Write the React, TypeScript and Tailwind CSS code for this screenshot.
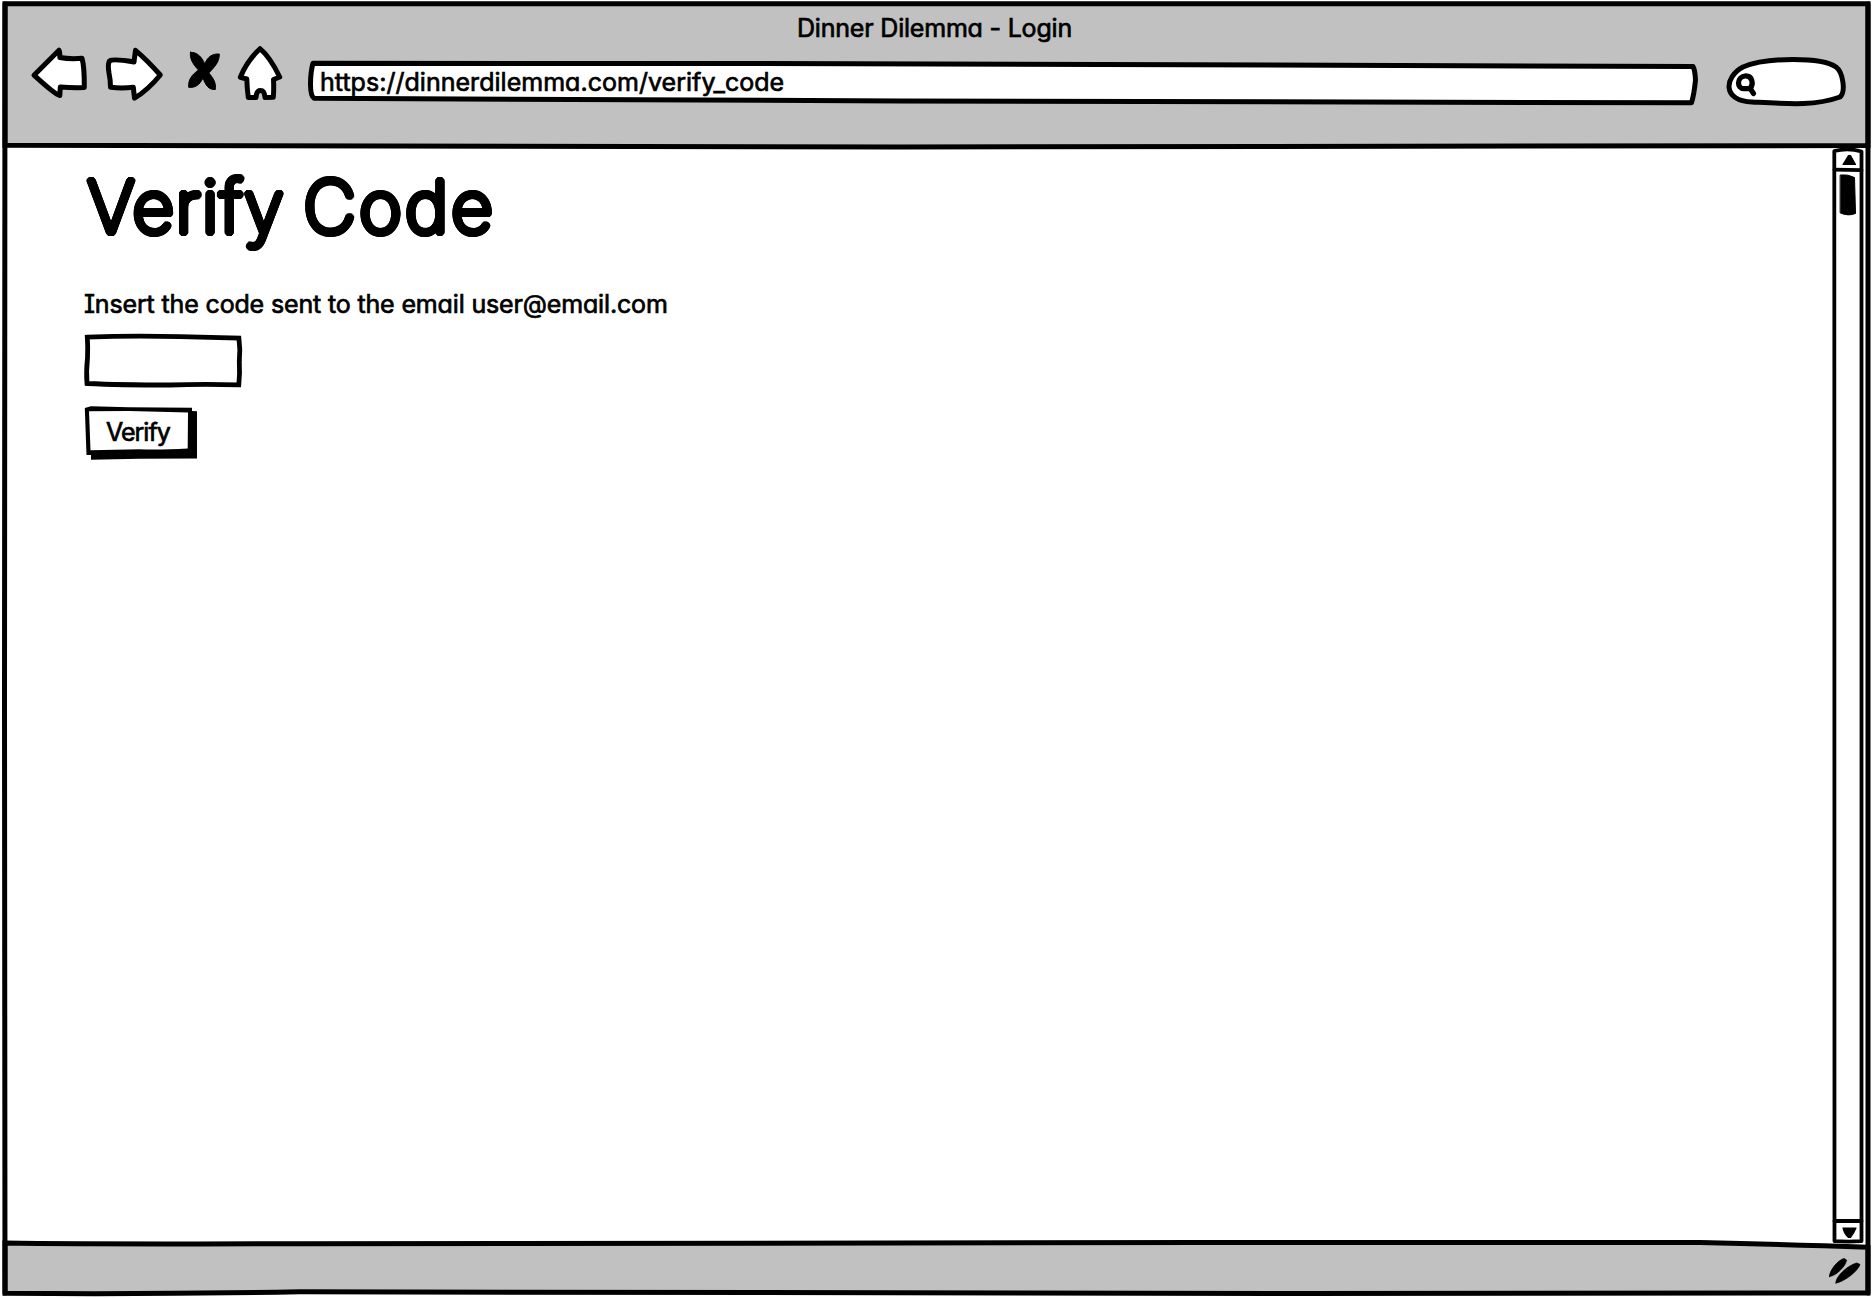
import type { ReactNode } from "react";

type SketchProps = { viewBox: string; className?: string; children: ReactNode };

/* Hand-drawn artwork; rounded ink strokes. */
function Sketch({ viewBox, className = "", children }: SketchProps) {
  return (
    <svg
      viewBox={viewBox}
      preserveAspectRatio="none"
      className={"overflow-visible " + className}
      fill="none"
      stroke="#000"
      strokeWidth="5"
      strokeLinecap="round"
      strokeLinejoin="round"
      aria-hidden="true"
    >
      {children}
    </svg>
  );
}

const BACKDROP = "pointer-events-none absolute inset-0 size-full";
const LABEL =
  "whitespace-nowrap text-[25px] leading-[30px] font-normal [-webkit-text-stroke:0.7px_#000]";
/* Thin glyphs thickened evenly all round, which gives them round pen ends. */
const MARKER =
  "font-extralight [text-shadow:3px_0_#000,2.8px_1.1px_#000,2.1px_2.1px_#000,1.1px_2.8px_#000,0_3px_#000,-1.1px_2.8px_#000,-2.1px_2.1px_#000,-2.8px_1.1px_#000,-3px_0_#000,-2.8px_-1.1px_#000,-2.1px_-2.1px_#000,-1.1px_-2.8px_#000,0_-3px_#000,1.1px_-2.8px_#000,2.1px_-2.1px_#000,2.8px_-1.1px_#000]";

function Toolbar() {
  return (
    <header className="relative flex h-[145px] shrink-0 flex-col">
      <Sketch viewBox="0 0 1872 145" className={BACKDROP}>
        <path
          d="M5 3.8H1868V145.5Q1200 145 900 147Q400 147 5 145.3Z"
          fill="#c1c1c1"
          strokeLinejoin="miter"
        />
      </Sketch>
      <div className="relative flex h-[47px] justify-center pt-[13px] pr-[3px]">
        <h2 className={LABEL + " tracking-[-0.2px]"}>Dinner Dilemma - Login</h2>
      </div>
      <nav className="relative flex h-[60px] items-start pl-[30px]">
        <button type="button" aria-label="Back" className="h-[55px] w-[58px]">
          <Sketch viewBox="30 47 58 55" className="size-full">
            <path
              d="M34 75.2L59 50.2Q60 51 59.8 57.5Q70 59.3 82 58.3Q84.5 67 84.3 87.6Q72 88 60.3 87L59.8 95.5Q55 94.5 34 75.2Z"
              fill="#fff"
            />
          </Sketch>
        </button>
        <button type="button" aria-label="Forward" className="ml-[17px] h-[55px] w-[59px]">
          <Sketch viewBox="105 47 59 55" className="size-full">
            <path
              d="M109.5 61Q113 58.5 134 62L135.5 50.3Q147 60 160.3 75Q148 90 134.5 98.2L133.3 87.2Q122 88.5 110.5 87.3Q110.5 80 109 73Q107.5 64 109.5 61Z"
              fill="#fff"
            />
          </Sketch>
        </button>
        <button type="button" aria-label="Stop" className="ml-[23px] h-[55px] w-[34px]">
          <Sketch viewBox="187 47 34 55" className="size-full">
            <path
              d="M190.500 52.300C197 52 202 57 204.700 64C207.500 57 212 53.500 219.300 54C219.500 62 214.500 67 208.800 73C213.500 78 216.500 84 215.300 89.500C208.500 90 205.500 85 203 78C199.500 85 195.500 88 188.700 87.300C188 79 192.500 74.500 198.500 70C192.500 64 189.500 58 190.500 52.300Z"
              fill="#000"
              strokeWidth="1"
            />
          </Sketch>
        </button>
        <button type="button" aria-label="Home" className="ml-[15px] h-[55px] w-[47px]">
          <Sketch viewBox="236 47 47 55" className="size-full">
            <path
              d="M260 48.700Q270 57 279.700 77L273.500 79.500Q274 88 273.300 97.300L265 97.500Q264.500 90.500 260.500 90.500Q256.500 90.500 256 97.500L248.300 97.600Q247 88 246.800 79L240.300 77.300Q247 61 260 48.700Z"
              fill="#fff"
            />
          </Sketch>
        </button>
        <div className="relative ml-[24px] mt-[12px] flex h-[46px] w-[1391px] items-center pl-[13px]">
          <Sketch viewBox="307 59 1391 46" className={BACKDROP}>
            <path
              d="M313 63.200Q600 62.500 850 63.700Q1300 66.500 1693 66.500Q1695 70 1695.500 80Q1694 95 1691.500 102.800Q1300 102.800 900 101Q500 98 314 98.200Q310.500 96 310.500 84Q310.500 72 313 63.200Z"
              fill="#fff"
            />
          </Sketch>
          <span className={LABEL + " relative tracking-[0.03px]"}>https://dinnerdilemma.com/verify_code</span>
        </div>
        <div className="relative ml-[28px] mt-[10px] h-[50px] w-[122px]">
          <Sketch viewBox="1726 57 122 50" className={BACKDROP}>
            <path
              d="M1752 102C1722 101 1724 77 1743 67C1767 57 1822 57 1836 67C1843 72 1846 92 1840 97C1815 106 1790 104 1752 102Z"
              fill="#fff"
            />
            <path
              d="M1745 76C1736.500 77 1736.500 88.700 1744 88.700H1750C1754 84 1752.500 75.500 1745 76ZM1750.500 89L1753.500 93.500"
              strokeWidth="5.2"
            />
          </Sketch>
        </div>
      </nav>
    </header>
  );
}

function Scrollbar() {
  return (
    <aside className="relative flex h-full w-[28px] shrink-0 flex-col justify-between">
      <Sketch viewBox="1834 145 28 1098" className={BACKDROP}>
        <path
          strokeWidth="3.8"
          d="M1834.300 151Q1848 147.500 1861.500 151.500V1241.200Q1848 1242 1834.500 1241.200Z"
          fill="#fff"
        />
      </Sketch>
      <button type="button" aria-label="Scroll up" className="relative h-[72px] w-[28px]">
        <Sketch viewBox="1834 145 28 72" className="size-full">
          <path d="M1834.500 169.700L1861.500 170.200" strokeWidth="3.800" />
          <path d="M1843 164.500L1848.500 155.500H1850.500L1855.500 164.500Z" fill="#000" strokeWidth="1.200" />
          <path
            d="M1840.500 175Q1848 174 1854.500 177.500L1855.500 213.500Q1848 216.500 1840.500 213Z"
            fill="#000"
            strokeWidth="1"
          />
        </Sketch>
      </button>
      <button type="button" aria-label="Scroll down" className="relative h-[25px] w-[28px]">
        <Sketch viewBox="1834 1218 28 25" className="size-full">
          <path d="M1834.500 1221H1861.500" strokeWidth="3.800" />
          <path d="M1843 1228H1856Q1854.500 1232 1850.500 1237.500H1848.500Q1844.500 1234 1843 1228Z" fill="#000" strokeWidth="1.200" />
        </Sketch>
      </button>
    </aside>
  );
}

function VerifyForm() {
  return (
    <form className="relative flex flex-1 flex-col items-start pl-[84px]">
      <h1
        className={
          "mt-[18px] ml-[3px] whitespace-nowrap text-[73px] leading-[88px] tracking-[1.1px] [word-spacing:-3.5px] " +
          MARKER
        }
      >
        Verify <span className="tracking-[3px]">Code</span>
      </h1>
      <p className={LABEL + " mt-[38px] tracking-[-0.15px]"}>Insert the code sent to the email user@email.com</p>
      <label className="relative mt-[15px] block h-[53px] w-[158px]">
        <Sketch viewBox="84 334 158 53" className={BACKDROP}>
          <path
            d="M87.300 337.200Q130 335.500 180 336.700Q215 337.500 238.900 338Q240.500 350 239.300 361Q240 374 238.800 384.800Q200 384 170 385Q120 385 87 383.500Q86 372 87.500 358Q88 347 87.300 337.200Z"
            fill="#fff"
            strokeLinejoin="miter"
            strokeWidth="4.800"
          />
        </Sketch>
        <input aria-label="Code" className={LABEL + " relative size-full bg-transparent px-3 outline-none"} />
      </label>
      <button type="button" className="relative mt-[19px] flex h-[54px] w-[113px] items-start pt-[11px] pl-[22px]">
        <Sketch viewBox="85 406 113 54" className={BACKDROP}>
          <path
            d="M85.800 408L92 406.300L130 407.300L193 407.800V411L198 411.200V458.500L140 458.800L92 459.700V455H87.500Z"
            fill="#000"
            stroke="none"
          />
          <path d="M90 411.200L130 411L189 412.500L188.700 448.500Q160 450 140 449.200Q115 449.700 91.500 450.300Z" fill="#fff" stroke="none" />
        </Sketch>
        <span className={LABEL + " relative tracking-[-1px]"}>Verify</span>
      </button>
    </form>
  );
}

function StatusBar() {
  return (
    <footer className="relative flex h-[55px] shrink-0 items-center justify-end pr-[11px]">
      <Sketch viewBox="0 1243 1872 55" className={BACKDROP}>
        <path
          d="M5 1243Q80 1244.200 300 1243.800Q700 1242 1200 1242.500Q1500 1242.500 1700 1242.500Q1790 1244.500 1868 1247.300V1293Q1700 1293.800 1300 1293.500Q700 1293 300 1291.800Q150 1294.500 5 1293.300Z"
          fill="#c1c1c1"
          strokeLinejoin="miter"
        />
      </Sketch>
      <Sketch viewBox="1829 1260 32 26" className="relative h-[26px] w-[32px]">
        <path
          d="M1829.500 1278.500C1829 1273 1838 1262 1844 1260.500L1846.500 1262C1846 1268 1836 1278 1829.500 1278.500ZM1836 1285C1835 1279 1848 1267 1857 1265L1860 1266.500C1858 1273 1844 1284 1836 1285Z"
          fill="#000"
          strokeWidth="0.800"
        />
      </Sketch>
    </footer>
  );
}

export default function App() {
  return (
    <div className="relative flex h-[1298px] w-[1872px] flex-col overflow-hidden bg-white text-black [font-family:Inter,'Open_Sans',sans-serif] [font-feature-settings:'cv11','cv08']">
      <Toolbar />
      <main className="flex h-[1098px] shrink-0 pr-[10px]">
        <VerifyForm />
        <Scrollbar />
      </main>
      <StatusBar />
      <Sketch viewBox="0 0 1872 1298" className={BACKDROP}>
        <path d="M5 4Q4 300 4.500 700T5 1293M1868 4Q1868.500 600 1868 1293" />
      </Sketch>
    </div>
  );
}
